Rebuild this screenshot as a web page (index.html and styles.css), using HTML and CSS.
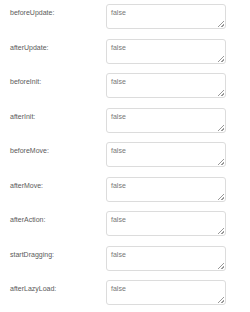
FILE: index.html
```html
<!DOCTYPE html>
<html lang="en">
<head>
    <meta charset="UTF-8">
    <title>Callbacks</title>
    <link rel="stylesheet" href="styles.css">
</head>
<body>
    <form class="options">
        <div class="row">
            <label for="beforeUpdate">beforeUpdate:</label>
            <textarea id="beforeUpdate">false</textarea>
        </div>
        <div class="row">
            <label for="afterUpdate">afterUpdate:</label>
            <textarea id="afterUpdate">false</textarea>
        </div>
        <div class="row">
            <label for="beforeInit">beforeInit:</label>
            <textarea id="beforeInit">false</textarea>
        </div>
        <div class="row">
            <label for="afterInit">afterInit:</label>
            <textarea id="afterInit">false</textarea>
        </div>
        <div class="row">
            <label for="beforeMove">beforeMove:</label>
            <textarea id="beforeMove">false</textarea>
        </div>
        <div class="row">
            <label for="afterMove">afterMove:</label>
            <textarea id="afterMove">false</textarea>
        </div>
        <div class="row">
            <label for="afterAction">afterAction:</label>
            <textarea id="afterAction">false</textarea>
        </div>
        <div class="row">
            <label for="startDragging">startDragging:</label>
            <textarea id="startDragging">false</textarea>
        </div>
        <div class="row">
            <label for="afterLazyLoad">afterLazyLoad:</label>
            <textarea id="afterLazyLoad">false</textarea>
        </div>
    </form>
</body>
</html>
```

FILE: styles.css
```css
*{
    margin: 0;
    padding: 0;
    box-sizing: border-box;
    font-family: "Liberation Sans", Arial, sans-serif;
}
body{
    background: #fff;
}
.options{
    display: flex;
    flex-direction: column;
    padding: 4px 0 0 10px;
}
.row{
    display: flex;
    align-items: flex-start;
    height: 34.5px;
}
.row label{
    width: 96px;
    font-size: 7px;
    line-height: 9px;
    padding-top: 4px;
    color: #5a5a5a;
}
.row textarea{
    width: 120px;
    height: 25px;
    padding: 3px 4px;
    font-size: 7px;
    line-height: 9px;
    color: #777;
    border: 1px solid #dcdcdc;
    border-radius: 3px;
    resize: vertical;
    background: #fff;
}
.row textarea::-webkit-resizer{
    background: linear-gradient(135deg, transparent 45%, #999 45%, #999 58%, transparent 58%, transparent 72%, #999 72%, #999 86%, transparent 86%) no-repeat right 1px bottom 1px / 6px 6px;
}
```
